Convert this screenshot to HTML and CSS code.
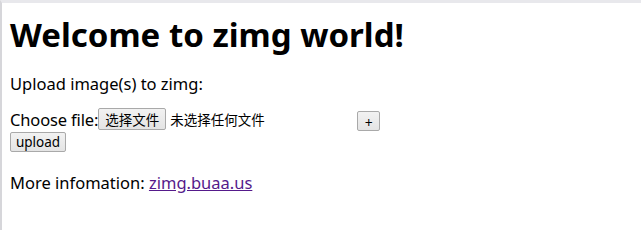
FILE: index.html
```html
<!DOCTYPE html>
<html lang="zh-CN">
<head>
<meta charset="UTF-8">
<title>zimg</title>
<link rel="stylesheet" href="styles.css">
</head>
<body>
  <div class="page">
    <h1>Welcome to zimg world!</h1>
    <p class="intro">Upload image(s) to zimg:</p>
    <form class="uploadForm" onsubmit="return false;">
      <div class="fileRow">
        <span class="label">Choose file:</span><span class="fileBox"><button type="button" class="btn pick">选择文件</button><span class="noFile">未选择任何文件</span></span><button type="button" class="btn plus">+</button>
      </div>
      <button type="submit" class="btn submit">upload</button>
    </form>
    <p class="more">More infomation: <a href="#">zimg.buaa.us</a></p>
  </div>
</body>
</html>
```

FILE: styles.css
```css
html, body {
  margin: 0;
  height: 100%;
}
body {
  font-family: "Noto Sans", "Noto Sans CJK SC", sans-serif;
  font-size: 16.5px;
  color: #000;
  background: #fff;
}
.page {
  box-sizing: border-box;
  min-height: 100%;
  border-top: 3px solid #e8e8ec;
  border-left: 2px solid #d6d6da;
  padding: 1px 8px 8px 8px;
}
h1 {
  font-size: 33px;
  font-weight: bold;
  margin: 11px 0 18px 0;
  line-height: 40px;
}
.intro {
  margin: 0 0 11px 0;
  line-height: 22px;
}
.uploadForm {
  margin: 0;
}
.fileRow {
  display: flex;
  align-items: center;
  height: 26px;
}
.label {
  letter-spacing: -0.15px;
}
.fileBox {
  display: inline-flex;
  align-items: center;
  width: 259px;
}
.btn {
  font-family: "Noto Sans CJK SC", "Noto Sans", sans-serif;
  font-size: 13.5px;
  color: #000;
  background: linear-gradient(#f2f2f2, #e4e4e4);
  border: 1px solid #a9a9a9;
  border-radius: 2px;
  padding: 0 6px;
  height: 21px;
  line-height: 19px;
  cursor: pointer;
}
.pick {
  height: 22px;
  padding: 0 6px;
}
.noFile {
  font-family: "Noto Sans CJK SC", sans-serif;
  font-size: 13.5px;
  margin-left: 4px;
}
.plus {
  width: 23px;
  padding: 0;
  height: 20px;
  margin-top: 3px;
}
.submit {
  display: block;
  height: 20px;
  width: 56px;
  padding: 0;
  font-family: "Noto Sans", sans-serif;
  font-size: 13.5px;
}
.more {
  margin: 20px 0 0 0;
  line-height: 22px;
}
.more a {
  color: #551a8b;
}
```
